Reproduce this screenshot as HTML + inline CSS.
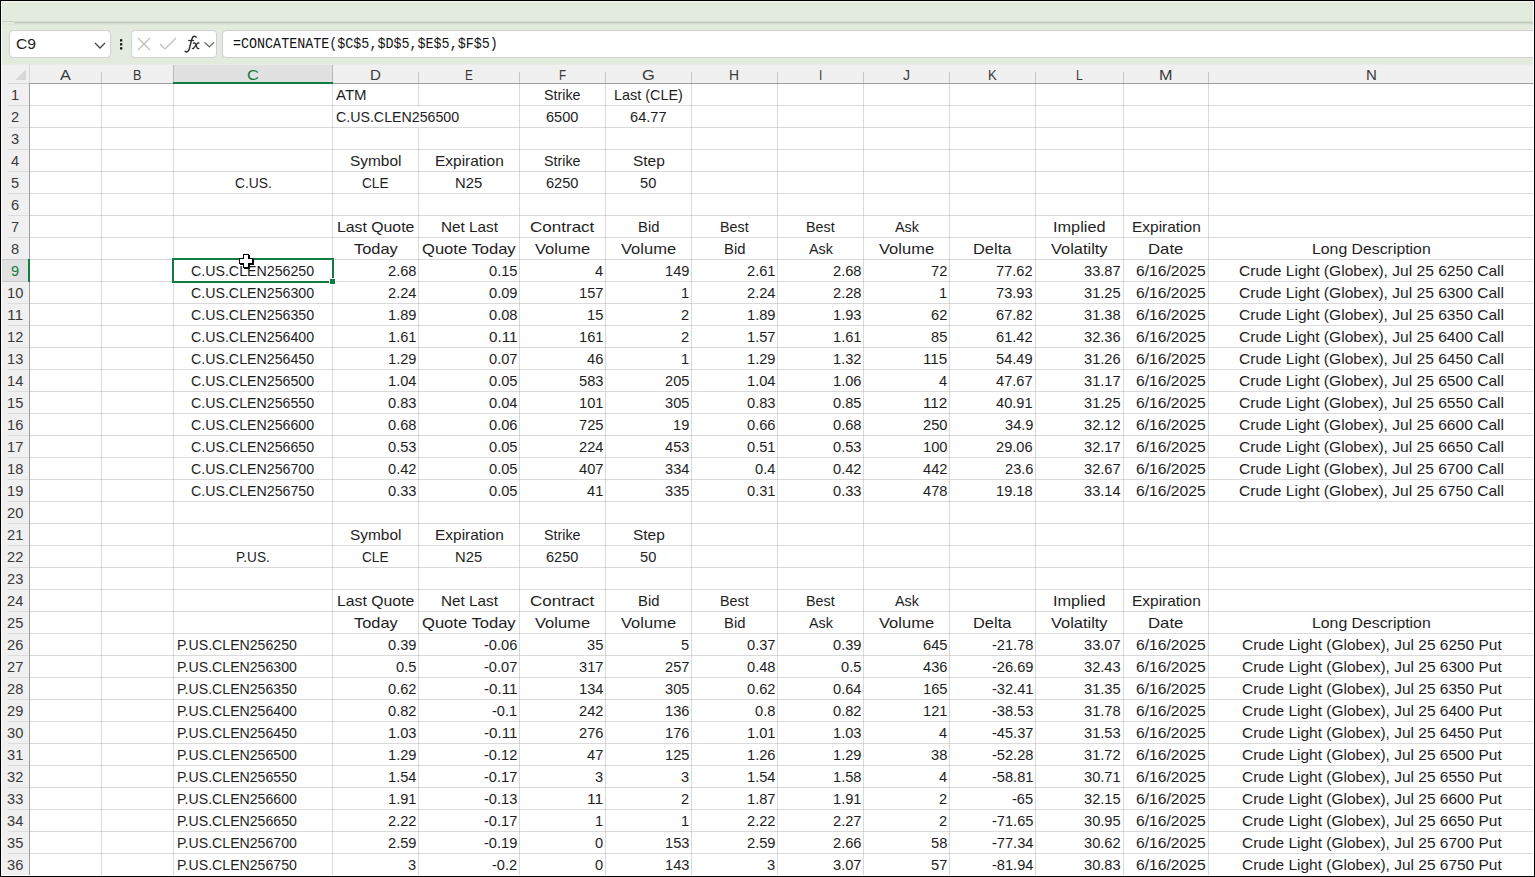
<!DOCTYPE html><html><head><meta charset="utf-8"><style>
html,body{margin:0;padding:0;}
body{width:1535px;height:877px;overflow:hidden;position:relative;background:#fff;font-family:"Liberation Sans",sans-serif;}
.a{position:absolute;}
.t{position:absolute;white-space:nowrap;font-size:15px;line-height:22px;height:22px;color:#1e1e1e;transform-origin:0 0;}
.h{position:absolute;white-space:nowrap;font-size:15px;line-height:19px;color:#444;transform-origin:0 0;}
</style></head><body>

<div class="a" style="left:0;top:0;width:1535px;height:64px;background:#e2ebde"></div>
<div class="a" style="left:0;top:21px;width:14px;height:1px;background:#cbd3c8"></div>
<div class="a" style="left:14px;top:21px;width:1521px;height:1px;background:#d6ded3"></div>
<div class="a" style="left:14px;top:22px;width:1521px;height:1px;background:#c2cabf"></div>
<div class="a" style="left:14px;top:23px;width:1521px;height:1px;background:#d3dbd0"></div>
<div class="a" style="left:0;top:24px;width:1535px;height:1px;background:#dde5da"></div>
<div class="a" style="left:9px;top:30px;width:100px;height:26px;border:1px solid #d0d0d0;border-radius:4px;background:#fff"></div>
<div class="a" style="left:131px;top:30px;width:84px;height:26px;border:1px solid #d0d0d0;border-radius:4px;background:#fff"></div>
<div class="a" style="left:222px;top:30px;width:1330px;height:26px;border:1px solid #d0d0d0;border-radius:4px;background:#fff"></div>
<div class="t" style="left:15.50px;top:33.00px;transform:scaleX(1.0456);color:#222">C9</div>
<svg class="a" style="left:0;top:0" width="1535" height="64"><path d="M95 43 L100 48 L105 43" fill="none" stroke="#444" stroke-width="1.3"/><rect x="120" y="39.2" width="2.3" height="2.3" fill="#1a1a1a"/><rect x="120" y="43.2" width="2.3" height="2.3" fill="#1a1a1a"/><rect x="120" y="47.2" width="2.3" height="2.3" fill="#1a1a1a"/><path d="M138 38 L150 50 M150 38 L138 50" stroke="#bcbcbc" stroke-width="1.2" fill="none"/><path d="M160 44 L165 49 L176 38" stroke="#bcbcbc" stroke-width="1.2" fill="none"/><path d="M204.5 42.2 L209.3 46.8 L214.1 42.2" fill="none" stroke="#6e6e6e" stroke-width="1.2"/></svg>
<svg class="a" style="left:0;top:0" width="230" height="64"><path d="M196.4 37.8 C196.0 36.3 194.4 35.8 193.3 36.6 C192.3 37.3 191.7 39.3 191.1 41.8 L189.7 47.3 C189.1 49.9 188.1 51.9 186.5 51.9 C185.6 51.9 185.1 51.3 184.9 50.7" fill="none" stroke="#2b2b2b" stroke-width="1.45"/><path d="M188.2 40.5 H193.9" fill="none" stroke="#2b2b2b" stroke-width="1.25"/><path d="M192.9 43.6 C194.3 42.4 195.2 42.9 195.7 44.4 L197.0 47.6 C197.5 48.9 198.4 49.0 199.2 48.1" fill="none" stroke="#2b2b2b" stroke-width="1.3"/><path d="M199.4 43.4 C198.7 42.6 197.8 42.8 197.1 43.6 L193.9 47.9 C193.3 48.8 192.6 48.8 192.2 48.2" fill="none" stroke="#2b2b2b" stroke-width="1.3"/></svg>
<div class="a" style="left:233px;top:34px;font-family:'Liberation Mono',monospace;font-size:14px;line-height:21px;transform-origin:0 0;transform:scaleX(0.955);color:#111;white-space:nowrap">=CONCATENATE($C$5,$D$5,$E$5,$F$5)</div>
<div class="a" style="left:1px;top:64px;width:1534px;height:20px;background:#f0f0f0"></div>
<div class="a" style="left:1px;top:84px;width:28px;height:793px;background:#f0f0f0"></div>
<div class="a" style="left:1px;top:64px;width:1534px;height:1px;background:#e9ece6"></div>
<div class="a" style="left:173px;top:65px;width:159px;height:18px;background:#e1e1e1"></div>
<div class="a" style="left:1px;top:260px;width:28px;height:21px;background:#e1e1e1"></div>
<svg class="a" style="left:0;top:0" width="1535" height="877" shape-rendering="crispEdges"><rect x="30" y="105" width="1505" height="1" fill="#dadada"/><rect x="8" y="105" width="21" height="1" fill="#dcdcdc"/><rect x="30" y="127" width="1505" height="1" fill="#dadada"/><rect x="8" y="127" width="21" height="1" fill="#dcdcdc"/><rect x="30" y="149" width="1505" height="1" fill="#dadada"/><rect x="8" y="149" width="21" height="1" fill="#dcdcdc"/><rect x="30" y="171" width="1505" height="1" fill="#dadada"/><rect x="8" y="171" width="21" height="1" fill="#dcdcdc"/><rect x="30" y="193" width="1505" height="1" fill="#dadada"/><rect x="8" y="193" width="21" height="1" fill="#dcdcdc"/><rect x="30" y="215" width="1505" height="1" fill="#dadada"/><rect x="8" y="215" width="21" height="1" fill="#dcdcdc"/><rect x="30" y="237" width="1505" height="1" fill="#dadada"/><rect x="8" y="237" width="21" height="1" fill="#dcdcdc"/><rect x="30" y="259" width="1505" height="1" fill="#dadada"/><rect x="8" y="259" width="21" height="1" fill="#dcdcdc"/><rect x="30" y="281" width="1505" height="1" fill="#dadada"/><rect x="8" y="281" width="21" height="1" fill="#dcdcdc"/><rect x="30" y="303" width="1505" height="1" fill="#dadada"/><rect x="8" y="303" width="21" height="1" fill="#dcdcdc"/><rect x="30" y="325" width="1505" height="1" fill="#dadada"/><rect x="8" y="325" width="21" height="1" fill="#dcdcdc"/><rect x="30" y="347" width="1505" height="1" fill="#dadada"/><rect x="8" y="347" width="21" height="1" fill="#dcdcdc"/><rect x="30" y="369" width="1505" height="1" fill="#dadada"/><rect x="8" y="369" width="21" height="1" fill="#dcdcdc"/><rect x="30" y="391" width="1505" height="1" fill="#dadada"/><rect x="8" y="391" width="21" height="1" fill="#dcdcdc"/><rect x="30" y="413" width="1505" height="1" fill="#dadada"/><rect x="8" y="413" width="21" height="1" fill="#dcdcdc"/><rect x="30" y="435" width="1505" height="1" fill="#dadada"/><rect x="8" y="435" width="21" height="1" fill="#dcdcdc"/><rect x="30" y="457" width="1505" height="1" fill="#dadada"/><rect x="8" y="457" width="21" height="1" fill="#dcdcdc"/><rect x="30" y="479" width="1505" height="1" fill="#dadada"/><rect x="8" y="479" width="21" height="1" fill="#dcdcdc"/><rect x="30" y="501" width="1505" height="1" fill="#dadada"/><rect x="8" y="501" width="21" height="1" fill="#dcdcdc"/><rect x="30" y="523" width="1505" height="1" fill="#dadada"/><rect x="8" y="523" width="21" height="1" fill="#dcdcdc"/><rect x="30" y="545" width="1505" height="1" fill="#dadada"/><rect x="8" y="545" width="21" height="1" fill="#dcdcdc"/><rect x="30" y="567" width="1505" height="1" fill="#dadada"/><rect x="8" y="567" width="21" height="1" fill="#dcdcdc"/><rect x="30" y="589" width="1505" height="1" fill="#dadada"/><rect x="8" y="589" width="21" height="1" fill="#dcdcdc"/><rect x="30" y="611" width="1505" height="1" fill="#dadada"/><rect x="8" y="611" width="21" height="1" fill="#dcdcdc"/><rect x="30" y="633" width="1505" height="1" fill="#dadada"/><rect x="8" y="633" width="21" height="1" fill="#dcdcdc"/><rect x="30" y="655" width="1505" height="1" fill="#dadada"/><rect x="8" y="655" width="21" height="1" fill="#dcdcdc"/><rect x="30" y="677" width="1505" height="1" fill="#dadada"/><rect x="8" y="677" width="21" height="1" fill="#dcdcdc"/><rect x="30" y="699" width="1505" height="1" fill="#dadada"/><rect x="8" y="699" width="21" height="1" fill="#dcdcdc"/><rect x="30" y="721" width="1505" height="1" fill="#dadada"/><rect x="8" y="721" width="21" height="1" fill="#dcdcdc"/><rect x="30" y="743" width="1505" height="1" fill="#dadada"/><rect x="8" y="743" width="21" height="1" fill="#dcdcdc"/><rect x="30" y="765" width="1505" height="1" fill="#dadada"/><rect x="8" y="765" width="21" height="1" fill="#dcdcdc"/><rect x="30" y="787" width="1505" height="1" fill="#dadada"/><rect x="8" y="787" width="21" height="1" fill="#dcdcdc"/><rect x="30" y="809" width="1505" height="1" fill="#dadada"/><rect x="8" y="809" width="21" height="1" fill="#dcdcdc"/><rect x="30" y="831" width="1505" height="1" fill="#dadada"/><rect x="8" y="831" width="21" height="1" fill="#dcdcdc"/><rect x="30" y="853" width="1505" height="1" fill="#dadada"/><rect x="8" y="853" width="21" height="1" fill="#dcdcdc"/><rect x="30" y="875" width="1505" height="1" fill="#dadada"/><rect x="8" y="875" width="21" height="1" fill="#dcdcdc"/><rect x="101" y="84" width="1" height="793" fill="#dadada"/><rect x="101" y="72" width="1" height="11" fill="#c6c6c6"/><rect x="173" y="84" width="1" height="793" fill="#dadada"/><rect x="173" y="72" width="1" height="11" fill="#c6c6c6"/><rect x="332" y="84" width="1" height="793" fill="#dadada"/><rect x="332" y="72" width="1" height="11" fill="#c6c6c6"/><rect x="418" y="84" width="1" height="22" fill="#dadada"/><rect x="418" y="127" width="1" height="750" fill="#dadada"/><rect x="418" y="72" width="1" height="11" fill="#c6c6c6"/><rect x="519" y="84" width="1" height="793" fill="#dadada"/><rect x="519" y="72" width="1" height="11" fill="#c6c6c6"/><rect x="605" y="84" width="1" height="793" fill="#dadada"/><rect x="605" y="72" width="1" height="11" fill="#c6c6c6"/><rect x="691" y="84" width="1" height="793" fill="#dadada"/><rect x="691" y="72" width="1" height="11" fill="#c6c6c6"/><rect x="777" y="84" width="1" height="793" fill="#dadada"/><rect x="777" y="72" width="1" height="11" fill="#c6c6c6"/><rect x="863" y="84" width="1" height="793" fill="#dadada"/><rect x="863" y="72" width="1" height="11" fill="#c6c6c6"/><rect x="949" y="84" width="1" height="793" fill="#dadada"/><rect x="949" y="72" width="1" height="11" fill="#c6c6c6"/><rect x="1035" y="84" width="1" height="793" fill="#dadada"/><rect x="1035" y="72" width="1" height="11" fill="#c6c6c6"/><rect x="1123" y="84" width="1" height="793" fill="#dadada"/><rect x="1123" y="72" width="1" height="11" fill="#c6c6c6"/><rect x="1208" y="84" width="1" height="793" fill="#dadada"/><rect x="1208" y="72" width="1" height="11" fill="#c6c6c6"/><rect x="101" y="105" width="1" height="1" fill="#c9c9c9"/><rect x="173" y="105" width="1" height="1" fill="#c9c9c9"/><rect x="332" y="105" width="1" height="1" fill="#c9c9c9"/><rect x="418" y="105" width="1" height="1" fill="#c9c9c9"/><rect x="519" y="105" width="1" height="1" fill="#c9c9c9"/><rect x="605" y="105" width="1" height="1" fill="#c9c9c9"/><rect x="691" y="105" width="1" height="1" fill="#c9c9c9"/><rect x="777" y="105" width="1" height="1" fill="#c9c9c9"/><rect x="863" y="105" width="1" height="1" fill="#c9c9c9"/><rect x="949" y="105" width="1" height="1" fill="#c9c9c9"/><rect x="1035" y="105" width="1" height="1" fill="#c9c9c9"/><rect x="1123" y="105" width="1" height="1" fill="#c9c9c9"/><rect x="1208" y="105" width="1" height="1" fill="#c9c9c9"/><rect x="101" y="127" width="1" height="1" fill="#c9c9c9"/><rect x="173" y="127" width="1" height="1" fill="#c9c9c9"/><rect x="332" y="127" width="1" height="1" fill="#c9c9c9"/><rect x="519" y="127" width="1" height="1" fill="#c9c9c9"/><rect x="605" y="127" width="1" height="1" fill="#c9c9c9"/><rect x="691" y="127" width="1" height="1" fill="#c9c9c9"/><rect x="777" y="127" width="1" height="1" fill="#c9c9c9"/><rect x="863" y="127" width="1" height="1" fill="#c9c9c9"/><rect x="949" y="127" width="1" height="1" fill="#c9c9c9"/><rect x="1035" y="127" width="1" height="1" fill="#c9c9c9"/><rect x="1123" y="127" width="1" height="1" fill="#c9c9c9"/><rect x="1208" y="127" width="1" height="1" fill="#c9c9c9"/><rect x="101" y="149" width="1" height="1" fill="#c9c9c9"/><rect x="173" y="149" width="1" height="1" fill="#c9c9c9"/><rect x="332" y="149" width="1" height="1" fill="#c9c9c9"/><rect x="418" y="149" width="1" height="1" fill="#c9c9c9"/><rect x="519" y="149" width="1" height="1" fill="#c9c9c9"/><rect x="605" y="149" width="1" height="1" fill="#c9c9c9"/><rect x="691" y="149" width="1" height="1" fill="#c9c9c9"/><rect x="777" y="149" width="1" height="1" fill="#c9c9c9"/><rect x="863" y="149" width="1" height="1" fill="#c9c9c9"/><rect x="949" y="149" width="1" height="1" fill="#c9c9c9"/><rect x="1035" y="149" width="1" height="1" fill="#c9c9c9"/><rect x="1123" y="149" width="1" height="1" fill="#c9c9c9"/><rect x="1208" y="149" width="1" height="1" fill="#c9c9c9"/><rect x="101" y="171" width="1" height="1" fill="#c9c9c9"/><rect x="173" y="171" width="1" height="1" fill="#c9c9c9"/><rect x="332" y="171" width="1" height="1" fill="#c9c9c9"/><rect x="418" y="171" width="1" height="1" fill="#c9c9c9"/><rect x="519" y="171" width="1" height="1" fill="#c9c9c9"/><rect x="605" y="171" width="1" height="1" fill="#c9c9c9"/><rect x="691" y="171" width="1" height="1" fill="#c9c9c9"/><rect x="777" y="171" width="1" height="1" fill="#c9c9c9"/><rect x="863" y="171" width="1" height="1" fill="#c9c9c9"/><rect x="949" y="171" width="1" height="1" fill="#c9c9c9"/><rect x="1035" y="171" width="1" height="1" fill="#c9c9c9"/><rect x="1123" y="171" width="1" height="1" fill="#c9c9c9"/><rect x="1208" y="171" width="1" height="1" fill="#c9c9c9"/><rect x="101" y="193" width="1" height="1" fill="#c9c9c9"/><rect x="173" y="193" width="1" height="1" fill="#c9c9c9"/><rect x="332" y="193" width="1" height="1" fill="#c9c9c9"/><rect x="418" y="193" width="1" height="1" fill="#c9c9c9"/><rect x="519" y="193" width="1" height="1" fill="#c9c9c9"/><rect x="605" y="193" width="1" height="1" fill="#c9c9c9"/><rect x="691" y="193" width="1" height="1" fill="#c9c9c9"/><rect x="777" y="193" width="1" height="1" fill="#c9c9c9"/><rect x="863" y="193" width="1" height="1" fill="#c9c9c9"/><rect x="949" y="193" width="1" height="1" fill="#c9c9c9"/><rect x="1035" y="193" width="1" height="1" fill="#c9c9c9"/><rect x="1123" y="193" width="1" height="1" fill="#c9c9c9"/><rect x="1208" y="193" width="1" height="1" fill="#c9c9c9"/><rect x="101" y="215" width="1" height="1" fill="#c9c9c9"/><rect x="173" y="215" width="1" height="1" fill="#c9c9c9"/><rect x="332" y="215" width="1" height="1" fill="#c9c9c9"/><rect x="418" y="215" width="1" height="1" fill="#c9c9c9"/><rect x="519" y="215" width="1" height="1" fill="#c9c9c9"/><rect x="605" y="215" width="1" height="1" fill="#c9c9c9"/><rect x="691" y="215" width="1" height="1" fill="#c9c9c9"/><rect x="777" y="215" width="1" height="1" fill="#c9c9c9"/><rect x="863" y="215" width="1" height="1" fill="#c9c9c9"/><rect x="949" y="215" width="1" height="1" fill="#c9c9c9"/><rect x="1035" y="215" width="1" height="1" fill="#c9c9c9"/><rect x="1123" y="215" width="1" height="1" fill="#c9c9c9"/><rect x="1208" y="215" width="1" height="1" fill="#c9c9c9"/><rect x="101" y="237" width="1" height="1" fill="#c9c9c9"/><rect x="173" y="237" width="1" height="1" fill="#c9c9c9"/><rect x="332" y="237" width="1" height="1" fill="#c9c9c9"/><rect x="418" y="237" width="1" height="1" fill="#c9c9c9"/><rect x="519" y="237" width="1" height="1" fill="#c9c9c9"/><rect x="605" y="237" width="1" height="1" fill="#c9c9c9"/><rect x="691" y="237" width="1" height="1" fill="#c9c9c9"/><rect x="777" y="237" width="1" height="1" fill="#c9c9c9"/><rect x="863" y="237" width="1" height="1" fill="#c9c9c9"/><rect x="949" y="237" width="1" height="1" fill="#c9c9c9"/><rect x="1035" y="237" width="1" height="1" fill="#c9c9c9"/><rect x="1123" y="237" width="1" height="1" fill="#c9c9c9"/><rect x="1208" y="237" width="1" height="1" fill="#c9c9c9"/><rect x="101" y="259" width="1" height="1" fill="#c9c9c9"/><rect x="173" y="259" width="1" height="1" fill="#c9c9c9"/><rect x="332" y="259" width="1" height="1" fill="#c9c9c9"/><rect x="418" y="259" width="1" height="1" fill="#c9c9c9"/><rect x="519" y="259" width="1" height="1" fill="#c9c9c9"/><rect x="605" y="259" width="1" height="1" fill="#c9c9c9"/><rect x="691" y="259" width="1" height="1" fill="#c9c9c9"/><rect x="777" y="259" width="1" height="1" fill="#c9c9c9"/><rect x="863" y="259" width="1" height="1" fill="#c9c9c9"/><rect x="949" y="259" width="1" height="1" fill="#c9c9c9"/><rect x="1035" y="259" width="1" height="1" fill="#c9c9c9"/><rect x="1123" y="259" width="1" height="1" fill="#c9c9c9"/><rect x="1208" y="259" width="1" height="1" fill="#c9c9c9"/><rect x="101" y="281" width="1" height="1" fill="#c9c9c9"/><rect x="173" y="281" width="1" height="1" fill="#c9c9c9"/><rect x="332" y="281" width="1" height="1" fill="#c9c9c9"/><rect x="418" y="281" width="1" height="1" fill="#c9c9c9"/><rect x="519" y="281" width="1" height="1" fill="#c9c9c9"/><rect x="605" y="281" width="1" height="1" fill="#c9c9c9"/><rect x="691" y="281" width="1" height="1" fill="#c9c9c9"/><rect x="777" y="281" width="1" height="1" fill="#c9c9c9"/><rect x="863" y="281" width="1" height="1" fill="#c9c9c9"/><rect x="949" y="281" width="1" height="1" fill="#c9c9c9"/><rect x="1035" y="281" width="1" height="1" fill="#c9c9c9"/><rect x="1123" y="281" width="1" height="1" fill="#c9c9c9"/><rect x="1208" y="281" width="1" height="1" fill="#c9c9c9"/><rect x="101" y="303" width="1" height="1" fill="#c9c9c9"/><rect x="173" y="303" width="1" height="1" fill="#c9c9c9"/><rect x="332" y="303" width="1" height="1" fill="#c9c9c9"/><rect x="418" y="303" width="1" height="1" fill="#c9c9c9"/><rect x="519" y="303" width="1" height="1" fill="#c9c9c9"/><rect x="605" y="303" width="1" height="1" fill="#c9c9c9"/><rect x="691" y="303" width="1" height="1" fill="#c9c9c9"/><rect x="777" y="303" width="1" height="1" fill="#c9c9c9"/><rect x="863" y="303" width="1" height="1" fill="#c9c9c9"/><rect x="949" y="303" width="1" height="1" fill="#c9c9c9"/><rect x="1035" y="303" width="1" height="1" fill="#c9c9c9"/><rect x="1123" y="303" width="1" height="1" fill="#c9c9c9"/><rect x="1208" y="303" width="1" height="1" fill="#c9c9c9"/><rect x="101" y="325" width="1" height="1" fill="#c9c9c9"/><rect x="173" y="325" width="1" height="1" fill="#c9c9c9"/><rect x="332" y="325" width="1" height="1" fill="#c9c9c9"/><rect x="418" y="325" width="1" height="1" fill="#c9c9c9"/><rect x="519" y="325" width="1" height="1" fill="#c9c9c9"/><rect x="605" y="325" width="1" height="1" fill="#c9c9c9"/><rect x="691" y="325" width="1" height="1" fill="#c9c9c9"/><rect x="777" y="325" width="1" height="1" fill="#c9c9c9"/><rect x="863" y="325" width="1" height="1" fill="#c9c9c9"/><rect x="949" y="325" width="1" height="1" fill="#c9c9c9"/><rect x="1035" y="325" width="1" height="1" fill="#c9c9c9"/><rect x="1123" y="325" width="1" height="1" fill="#c9c9c9"/><rect x="1208" y="325" width="1" height="1" fill="#c9c9c9"/><rect x="101" y="347" width="1" height="1" fill="#c9c9c9"/><rect x="173" y="347" width="1" height="1" fill="#c9c9c9"/><rect x="332" y="347" width="1" height="1" fill="#c9c9c9"/><rect x="418" y="347" width="1" height="1" fill="#c9c9c9"/><rect x="519" y="347" width="1" height="1" fill="#c9c9c9"/><rect x="605" y="347" width="1" height="1" fill="#c9c9c9"/><rect x="691" y="347" width="1" height="1" fill="#c9c9c9"/><rect x="777" y="347" width="1" height="1" fill="#c9c9c9"/><rect x="863" y="347" width="1" height="1" fill="#c9c9c9"/><rect x="949" y="347" width="1" height="1" fill="#c9c9c9"/><rect x="1035" y="347" width="1" height="1" fill="#c9c9c9"/><rect x="1123" y="347" width="1" height="1" fill="#c9c9c9"/><rect x="1208" y="347" width="1" height="1" fill="#c9c9c9"/><rect x="101" y="369" width="1" height="1" fill="#c9c9c9"/><rect x="173" y="369" width="1" height="1" fill="#c9c9c9"/><rect x="332" y="369" width="1" height="1" fill="#c9c9c9"/><rect x="418" y="369" width="1" height="1" fill="#c9c9c9"/><rect x="519" y="369" width="1" height="1" fill="#c9c9c9"/><rect x="605" y="369" width="1" height="1" fill="#c9c9c9"/><rect x="691" y="369" width="1" height="1" fill="#c9c9c9"/><rect x="777" y="369" width="1" height="1" fill="#c9c9c9"/><rect x="863" y="369" width="1" height="1" fill="#c9c9c9"/><rect x="949" y="369" width="1" height="1" fill="#c9c9c9"/><rect x="1035" y="369" width="1" height="1" fill="#c9c9c9"/><rect x="1123" y="369" width="1" height="1" fill="#c9c9c9"/><rect x="1208" y="369" width="1" height="1" fill="#c9c9c9"/><rect x="101" y="391" width="1" height="1" fill="#c9c9c9"/><rect x="173" y="391" width="1" height="1" fill="#c9c9c9"/><rect x="332" y="391" width="1" height="1" fill="#c9c9c9"/><rect x="418" y="391" width="1" height="1" fill="#c9c9c9"/><rect x="519" y="391" width="1" height="1" fill="#c9c9c9"/><rect x="605" y="391" width="1" height="1" fill="#c9c9c9"/><rect x="691" y="391" width="1" height="1" fill="#c9c9c9"/><rect x="777" y="391" width="1" height="1" fill="#c9c9c9"/><rect x="863" y="391" width="1" height="1" fill="#c9c9c9"/><rect x="949" y="391" width="1" height="1" fill="#c9c9c9"/><rect x="1035" y="391" width="1" height="1" fill="#c9c9c9"/><rect x="1123" y="391" width="1" height="1" fill="#c9c9c9"/><rect x="1208" y="391" width="1" height="1" fill="#c9c9c9"/><rect x="101" y="413" width="1" height="1" fill="#c9c9c9"/><rect x="173" y="413" width="1" height="1" fill="#c9c9c9"/><rect x="332" y="413" width="1" height="1" fill="#c9c9c9"/><rect x="418" y="413" width="1" height="1" fill="#c9c9c9"/><rect x="519" y="413" width="1" height="1" fill="#c9c9c9"/><rect x="605" y="413" width="1" height="1" fill="#c9c9c9"/><rect x="691" y="413" width="1" height="1" fill="#c9c9c9"/><rect x="777" y="413" width="1" height="1" fill="#c9c9c9"/><rect x="863" y="413" width="1" height="1" fill="#c9c9c9"/><rect x="949" y="413" width="1" height="1" fill="#c9c9c9"/><rect x="1035" y="413" width="1" height="1" fill="#c9c9c9"/><rect x="1123" y="413" width="1" height="1" fill="#c9c9c9"/><rect x="1208" y="413" width="1" height="1" fill="#c9c9c9"/><rect x="101" y="435" width="1" height="1" fill="#c9c9c9"/><rect x="173" y="435" width="1" height="1" fill="#c9c9c9"/><rect x="332" y="435" width="1" height="1" fill="#c9c9c9"/><rect x="418" y="435" width="1" height="1" fill="#c9c9c9"/><rect x="519" y="435" width="1" height="1" fill="#c9c9c9"/><rect x="605" y="435" width="1" height="1" fill="#c9c9c9"/><rect x="691" y="435" width="1" height="1" fill="#c9c9c9"/><rect x="777" y="435" width="1" height="1" fill="#c9c9c9"/><rect x="863" y="435" width="1" height="1" fill="#c9c9c9"/><rect x="949" y="435" width="1" height="1" fill="#c9c9c9"/><rect x="1035" y="435" width="1" height="1" fill="#c9c9c9"/><rect x="1123" y="435" width="1" height="1" fill="#c9c9c9"/><rect x="1208" y="435" width="1" height="1" fill="#c9c9c9"/><rect x="101" y="457" width="1" height="1" fill="#c9c9c9"/><rect x="173" y="457" width="1" height="1" fill="#c9c9c9"/><rect x="332" y="457" width="1" height="1" fill="#c9c9c9"/><rect x="418" y="457" width="1" height="1" fill="#c9c9c9"/><rect x="519" y="457" width="1" height="1" fill="#c9c9c9"/><rect x="605" y="457" width="1" height="1" fill="#c9c9c9"/><rect x="691" y="457" width="1" height="1" fill="#c9c9c9"/><rect x="777" y="457" width="1" height="1" fill="#c9c9c9"/><rect x="863" y="457" width="1" height="1" fill="#c9c9c9"/><rect x="949" y="457" width="1" height="1" fill="#c9c9c9"/><rect x="1035" y="457" width="1" height="1" fill="#c9c9c9"/><rect x="1123" y="457" width="1" height="1" fill="#c9c9c9"/><rect x="1208" y="457" width="1" height="1" fill="#c9c9c9"/><rect x="101" y="479" width="1" height="1" fill="#c9c9c9"/><rect x="173" y="479" width="1" height="1" fill="#c9c9c9"/><rect x="332" y="479" width="1" height="1" fill="#c9c9c9"/><rect x="418" y="479" width="1" height="1" fill="#c9c9c9"/><rect x="519" y="479" width="1" height="1" fill="#c9c9c9"/><rect x="605" y="479" width="1" height="1" fill="#c9c9c9"/><rect x="691" y="479" width="1" height="1" fill="#c9c9c9"/><rect x="777" y="479" width="1" height="1" fill="#c9c9c9"/><rect x="863" y="479" width="1" height="1" fill="#c9c9c9"/><rect x="949" y="479" width="1" height="1" fill="#c9c9c9"/><rect x="1035" y="479" width="1" height="1" fill="#c9c9c9"/><rect x="1123" y="479" width="1" height="1" fill="#c9c9c9"/><rect x="1208" y="479" width="1" height="1" fill="#c9c9c9"/><rect x="101" y="501" width="1" height="1" fill="#c9c9c9"/><rect x="173" y="501" width="1" height="1" fill="#c9c9c9"/><rect x="332" y="501" width="1" height="1" fill="#c9c9c9"/><rect x="418" y="501" width="1" height="1" fill="#c9c9c9"/><rect x="519" y="501" width="1" height="1" fill="#c9c9c9"/><rect x="605" y="501" width="1" height="1" fill="#c9c9c9"/><rect x="691" y="501" width="1" height="1" fill="#c9c9c9"/><rect x="777" y="501" width="1" height="1" fill="#c9c9c9"/><rect x="863" y="501" width="1" height="1" fill="#c9c9c9"/><rect x="949" y="501" width="1" height="1" fill="#c9c9c9"/><rect x="1035" y="501" width="1" height="1" fill="#c9c9c9"/><rect x="1123" y="501" width="1" height="1" fill="#c9c9c9"/><rect x="1208" y="501" width="1" height="1" fill="#c9c9c9"/><rect x="101" y="523" width="1" height="1" fill="#c9c9c9"/><rect x="173" y="523" width="1" height="1" fill="#c9c9c9"/><rect x="332" y="523" width="1" height="1" fill="#c9c9c9"/><rect x="418" y="523" width="1" height="1" fill="#c9c9c9"/><rect x="519" y="523" width="1" height="1" fill="#c9c9c9"/><rect x="605" y="523" width="1" height="1" fill="#c9c9c9"/><rect x="691" y="523" width="1" height="1" fill="#c9c9c9"/><rect x="777" y="523" width="1" height="1" fill="#c9c9c9"/><rect x="863" y="523" width="1" height="1" fill="#c9c9c9"/><rect x="949" y="523" width="1" height="1" fill="#c9c9c9"/><rect x="1035" y="523" width="1" height="1" fill="#c9c9c9"/><rect x="1123" y="523" width="1" height="1" fill="#c9c9c9"/><rect x="1208" y="523" width="1" height="1" fill="#c9c9c9"/><rect x="101" y="545" width="1" height="1" fill="#c9c9c9"/><rect x="173" y="545" width="1" height="1" fill="#c9c9c9"/><rect x="332" y="545" width="1" height="1" fill="#c9c9c9"/><rect x="418" y="545" width="1" height="1" fill="#c9c9c9"/><rect x="519" y="545" width="1" height="1" fill="#c9c9c9"/><rect x="605" y="545" width="1" height="1" fill="#c9c9c9"/><rect x="691" y="545" width="1" height="1" fill="#c9c9c9"/><rect x="777" y="545" width="1" height="1" fill="#c9c9c9"/><rect x="863" y="545" width="1" height="1" fill="#c9c9c9"/><rect x="949" y="545" width="1" height="1" fill="#c9c9c9"/><rect x="1035" y="545" width="1" height="1" fill="#c9c9c9"/><rect x="1123" y="545" width="1" height="1" fill="#c9c9c9"/><rect x="1208" y="545" width="1" height="1" fill="#c9c9c9"/><rect x="101" y="567" width="1" height="1" fill="#c9c9c9"/><rect x="173" y="567" width="1" height="1" fill="#c9c9c9"/><rect x="332" y="567" width="1" height="1" fill="#c9c9c9"/><rect x="418" y="567" width="1" height="1" fill="#c9c9c9"/><rect x="519" y="567" width="1" height="1" fill="#c9c9c9"/><rect x="605" y="567" width="1" height="1" fill="#c9c9c9"/><rect x="691" y="567" width="1" height="1" fill="#c9c9c9"/><rect x="777" y="567" width="1" height="1" fill="#c9c9c9"/><rect x="863" y="567" width="1" height="1" fill="#c9c9c9"/><rect x="949" y="567" width="1" height="1" fill="#c9c9c9"/><rect x="1035" y="567" width="1" height="1" fill="#c9c9c9"/><rect x="1123" y="567" width="1" height="1" fill="#c9c9c9"/><rect x="1208" y="567" width="1" height="1" fill="#c9c9c9"/><rect x="101" y="589" width="1" height="1" fill="#c9c9c9"/><rect x="173" y="589" width="1" height="1" fill="#c9c9c9"/><rect x="332" y="589" width="1" height="1" fill="#c9c9c9"/><rect x="418" y="589" width="1" height="1" fill="#c9c9c9"/><rect x="519" y="589" width="1" height="1" fill="#c9c9c9"/><rect x="605" y="589" width="1" height="1" fill="#c9c9c9"/><rect x="691" y="589" width="1" height="1" fill="#c9c9c9"/><rect x="777" y="589" width="1" height="1" fill="#c9c9c9"/><rect x="863" y="589" width="1" height="1" fill="#c9c9c9"/><rect x="949" y="589" width="1" height="1" fill="#c9c9c9"/><rect x="1035" y="589" width="1" height="1" fill="#c9c9c9"/><rect x="1123" y="589" width="1" height="1" fill="#c9c9c9"/><rect x="1208" y="589" width="1" height="1" fill="#c9c9c9"/><rect x="101" y="611" width="1" height="1" fill="#c9c9c9"/><rect x="173" y="611" width="1" height="1" fill="#c9c9c9"/><rect x="332" y="611" width="1" height="1" fill="#c9c9c9"/><rect x="418" y="611" width="1" height="1" fill="#c9c9c9"/><rect x="519" y="611" width="1" height="1" fill="#c9c9c9"/><rect x="605" y="611" width="1" height="1" fill="#c9c9c9"/><rect x="691" y="611" width="1" height="1" fill="#c9c9c9"/><rect x="777" y="611" width="1" height="1" fill="#c9c9c9"/><rect x="863" y="611" width="1" height="1" fill="#c9c9c9"/><rect x="949" y="611" width="1" height="1" fill="#c9c9c9"/><rect x="1035" y="611" width="1" height="1" fill="#c9c9c9"/><rect x="1123" y="611" width="1" height="1" fill="#c9c9c9"/><rect x="1208" y="611" width="1" height="1" fill="#c9c9c9"/><rect x="101" y="633" width="1" height="1" fill="#c9c9c9"/><rect x="173" y="633" width="1" height="1" fill="#c9c9c9"/><rect x="332" y="633" width="1" height="1" fill="#c9c9c9"/><rect x="418" y="633" width="1" height="1" fill="#c9c9c9"/><rect x="519" y="633" width="1" height="1" fill="#c9c9c9"/><rect x="605" y="633" width="1" height="1" fill="#c9c9c9"/><rect x="691" y="633" width="1" height="1" fill="#c9c9c9"/><rect x="777" y="633" width="1" height="1" fill="#c9c9c9"/><rect x="863" y="633" width="1" height="1" fill="#c9c9c9"/><rect x="949" y="633" width="1" height="1" fill="#c9c9c9"/><rect x="1035" y="633" width="1" height="1" fill="#c9c9c9"/><rect x="1123" y="633" width="1" height="1" fill="#c9c9c9"/><rect x="1208" y="633" width="1" height="1" fill="#c9c9c9"/><rect x="101" y="655" width="1" height="1" fill="#c9c9c9"/><rect x="173" y="655" width="1" height="1" fill="#c9c9c9"/><rect x="332" y="655" width="1" height="1" fill="#c9c9c9"/><rect x="418" y="655" width="1" height="1" fill="#c9c9c9"/><rect x="519" y="655" width="1" height="1" fill="#c9c9c9"/><rect x="605" y="655" width="1" height="1" fill="#c9c9c9"/><rect x="691" y="655" width="1" height="1" fill="#c9c9c9"/><rect x="777" y="655" width="1" height="1" fill="#c9c9c9"/><rect x="863" y="655" width="1" height="1" fill="#c9c9c9"/><rect x="949" y="655" width="1" height="1" fill="#c9c9c9"/><rect x="1035" y="655" width="1" height="1" fill="#c9c9c9"/><rect x="1123" y="655" width="1" height="1" fill="#c9c9c9"/><rect x="1208" y="655" width="1" height="1" fill="#c9c9c9"/><rect x="101" y="677" width="1" height="1" fill="#c9c9c9"/><rect x="173" y="677" width="1" height="1" fill="#c9c9c9"/><rect x="332" y="677" width="1" height="1" fill="#c9c9c9"/><rect x="418" y="677" width="1" height="1" fill="#c9c9c9"/><rect x="519" y="677" width="1" height="1" fill="#c9c9c9"/><rect x="605" y="677" width="1" height="1" fill="#c9c9c9"/><rect x="691" y="677" width="1" height="1" fill="#c9c9c9"/><rect x="777" y="677" width="1" height="1" fill="#c9c9c9"/><rect x="863" y="677" width="1" height="1" fill="#c9c9c9"/><rect x="949" y="677" width="1" height="1" fill="#c9c9c9"/><rect x="1035" y="677" width="1" height="1" fill="#c9c9c9"/><rect x="1123" y="677" width="1" height="1" fill="#c9c9c9"/><rect x="1208" y="677" width="1" height="1" fill="#c9c9c9"/><rect x="101" y="699" width="1" height="1" fill="#c9c9c9"/><rect x="173" y="699" width="1" height="1" fill="#c9c9c9"/><rect x="332" y="699" width="1" height="1" fill="#c9c9c9"/><rect x="418" y="699" width="1" height="1" fill="#c9c9c9"/><rect x="519" y="699" width="1" height="1" fill="#c9c9c9"/><rect x="605" y="699" width="1" height="1" fill="#c9c9c9"/><rect x="691" y="699" width="1" height="1" fill="#c9c9c9"/><rect x="777" y="699" width="1" height="1" fill="#c9c9c9"/><rect x="863" y="699" width="1" height="1" fill="#c9c9c9"/><rect x="949" y="699" width="1" height="1" fill="#c9c9c9"/><rect x="1035" y="699" width="1" height="1" fill="#c9c9c9"/><rect x="1123" y="699" width="1" height="1" fill="#c9c9c9"/><rect x="1208" y="699" width="1" height="1" fill="#c9c9c9"/><rect x="101" y="721" width="1" height="1" fill="#c9c9c9"/><rect x="173" y="721" width="1" height="1" fill="#c9c9c9"/><rect x="332" y="721" width="1" height="1" fill="#c9c9c9"/><rect x="418" y="721" width="1" height="1" fill="#c9c9c9"/><rect x="519" y="721" width="1" height="1" fill="#c9c9c9"/><rect x="605" y="721" width="1" height="1" fill="#c9c9c9"/><rect x="691" y="721" width="1" height="1" fill="#c9c9c9"/><rect x="777" y="721" width="1" height="1" fill="#c9c9c9"/><rect x="863" y="721" width="1" height="1" fill="#c9c9c9"/><rect x="949" y="721" width="1" height="1" fill="#c9c9c9"/><rect x="1035" y="721" width="1" height="1" fill="#c9c9c9"/><rect x="1123" y="721" width="1" height="1" fill="#c9c9c9"/><rect x="1208" y="721" width="1" height="1" fill="#c9c9c9"/><rect x="101" y="743" width="1" height="1" fill="#c9c9c9"/><rect x="173" y="743" width="1" height="1" fill="#c9c9c9"/><rect x="332" y="743" width="1" height="1" fill="#c9c9c9"/><rect x="418" y="743" width="1" height="1" fill="#c9c9c9"/><rect x="519" y="743" width="1" height="1" fill="#c9c9c9"/><rect x="605" y="743" width="1" height="1" fill="#c9c9c9"/><rect x="691" y="743" width="1" height="1" fill="#c9c9c9"/><rect x="777" y="743" width="1" height="1" fill="#c9c9c9"/><rect x="863" y="743" width="1" height="1" fill="#c9c9c9"/><rect x="949" y="743" width="1" height="1" fill="#c9c9c9"/><rect x="1035" y="743" width="1" height="1" fill="#c9c9c9"/><rect x="1123" y="743" width="1" height="1" fill="#c9c9c9"/><rect x="1208" y="743" width="1" height="1" fill="#c9c9c9"/><rect x="101" y="765" width="1" height="1" fill="#c9c9c9"/><rect x="173" y="765" width="1" height="1" fill="#c9c9c9"/><rect x="332" y="765" width="1" height="1" fill="#c9c9c9"/><rect x="418" y="765" width="1" height="1" fill="#c9c9c9"/><rect x="519" y="765" width="1" height="1" fill="#c9c9c9"/><rect x="605" y="765" width="1" height="1" fill="#c9c9c9"/><rect x="691" y="765" width="1" height="1" fill="#c9c9c9"/><rect x="777" y="765" width="1" height="1" fill="#c9c9c9"/><rect x="863" y="765" width="1" height="1" fill="#c9c9c9"/><rect x="949" y="765" width="1" height="1" fill="#c9c9c9"/><rect x="1035" y="765" width="1" height="1" fill="#c9c9c9"/><rect x="1123" y="765" width="1" height="1" fill="#c9c9c9"/><rect x="1208" y="765" width="1" height="1" fill="#c9c9c9"/><rect x="101" y="787" width="1" height="1" fill="#c9c9c9"/><rect x="173" y="787" width="1" height="1" fill="#c9c9c9"/><rect x="332" y="787" width="1" height="1" fill="#c9c9c9"/><rect x="418" y="787" width="1" height="1" fill="#c9c9c9"/><rect x="519" y="787" width="1" height="1" fill="#c9c9c9"/><rect x="605" y="787" width="1" height="1" fill="#c9c9c9"/><rect x="691" y="787" width="1" height="1" fill="#c9c9c9"/><rect x="777" y="787" width="1" height="1" fill="#c9c9c9"/><rect x="863" y="787" width="1" height="1" fill="#c9c9c9"/><rect x="949" y="787" width="1" height="1" fill="#c9c9c9"/><rect x="1035" y="787" width="1" height="1" fill="#c9c9c9"/><rect x="1123" y="787" width="1" height="1" fill="#c9c9c9"/><rect x="1208" y="787" width="1" height="1" fill="#c9c9c9"/><rect x="101" y="809" width="1" height="1" fill="#c9c9c9"/><rect x="173" y="809" width="1" height="1" fill="#c9c9c9"/><rect x="332" y="809" width="1" height="1" fill="#c9c9c9"/><rect x="418" y="809" width="1" height="1" fill="#c9c9c9"/><rect x="519" y="809" width="1" height="1" fill="#c9c9c9"/><rect x="605" y="809" width="1" height="1" fill="#c9c9c9"/><rect x="691" y="809" width="1" height="1" fill="#c9c9c9"/><rect x="777" y="809" width="1" height="1" fill="#c9c9c9"/><rect x="863" y="809" width="1" height="1" fill="#c9c9c9"/><rect x="949" y="809" width="1" height="1" fill="#c9c9c9"/><rect x="1035" y="809" width="1" height="1" fill="#c9c9c9"/><rect x="1123" y="809" width="1" height="1" fill="#c9c9c9"/><rect x="1208" y="809" width="1" height="1" fill="#c9c9c9"/><rect x="101" y="831" width="1" height="1" fill="#c9c9c9"/><rect x="173" y="831" width="1" height="1" fill="#c9c9c9"/><rect x="332" y="831" width="1" height="1" fill="#c9c9c9"/><rect x="418" y="831" width="1" height="1" fill="#c9c9c9"/><rect x="519" y="831" width="1" height="1" fill="#c9c9c9"/><rect x="605" y="831" width="1" height="1" fill="#c9c9c9"/><rect x="691" y="831" width="1" height="1" fill="#c9c9c9"/><rect x="777" y="831" width="1" height="1" fill="#c9c9c9"/><rect x="863" y="831" width="1" height="1" fill="#c9c9c9"/><rect x="949" y="831" width="1" height="1" fill="#c9c9c9"/><rect x="1035" y="831" width="1" height="1" fill="#c9c9c9"/><rect x="1123" y="831" width="1" height="1" fill="#c9c9c9"/><rect x="1208" y="831" width="1" height="1" fill="#c9c9c9"/><rect x="101" y="853" width="1" height="1" fill="#c9c9c9"/><rect x="173" y="853" width="1" height="1" fill="#c9c9c9"/><rect x="332" y="853" width="1" height="1" fill="#c9c9c9"/><rect x="418" y="853" width="1" height="1" fill="#c9c9c9"/><rect x="519" y="853" width="1" height="1" fill="#c9c9c9"/><rect x="605" y="853" width="1" height="1" fill="#c9c9c9"/><rect x="691" y="853" width="1" height="1" fill="#c9c9c9"/><rect x="777" y="853" width="1" height="1" fill="#c9c9c9"/><rect x="863" y="853" width="1" height="1" fill="#c9c9c9"/><rect x="949" y="853" width="1" height="1" fill="#c9c9c9"/><rect x="1035" y="853" width="1" height="1" fill="#c9c9c9"/><rect x="1123" y="853" width="1" height="1" fill="#c9c9c9"/><rect x="1208" y="853" width="1" height="1" fill="#c9c9c9"/><rect x="101" y="875" width="1" height="1" fill="#c9c9c9"/><rect x="173" y="875" width="1" height="1" fill="#c9c9c9"/><rect x="332" y="875" width="1" height="1" fill="#c9c9c9"/><rect x="418" y="875" width="1" height="1" fill="#c9c9c9"/><rect x="519" y="875" width="1" height="1" fill="#c9c9c9"/><rect x="605" y="875" width="1" height="1" fill="#c9c9c9"/><rect x="691" y="875" width="1" height="1" fill="#c9c9c9"/><rect x="777" y="875" width="1" height="1" fill="#c9c9c9"/><rect x="863" y="875" width="1" height="1" fill="#c9c9c9"/><rect x="949" y="875" width="1" height="1" fill="#c9c9c9"/><rect x="1035" y="875" width="1" height="1" fill="#c9c9c9"/><rect x="1123" y="875" width="1" height="1" fill="#c9c9c9"/><rect x="1208" y="875" width="1" height="1" fill="#c9c9c9"/><rect x="29" y="83" width="1506" height="1" fill="#9e9e9e"/><rect x="8" y="83" width="21" height="1" fill="#d6d6d6"/><rect x="29" y="84" width="1" height="793" fill="#9e9e9e"/><rect x="29" y="64" width="1" height="19" fill="#d6d6d6"/><path d="M26 69 L26 80 L15 80 Z" fill="#d8d8d8" shape-rendering="geometricPrecision"/><rect x="173" y="65" width="1" height="18" fill="#b8b8b8"/><rect x="332" y="65" width="1" height="18" fill="#b8b8b8"/><rect x="173" y="82" width="160" height="2" fill="#107c41"/><rect x="2" y="259" width="27" height="1" fill="#c8c8c8"/><rect x="2" y="281" width="27" height="1" fill="#c8c8c8"/><rect x="28" y="259" width="2" height="23" fill="#107c41"/><rect x="173" y="259" width="160" height="23" fill="none" stroke="#107c41" stroke-width="2"/><rect x="329" y="278" width="7" height="7" fill="#fff"/><rect x="330" y="279" width="5" height="5" fill="#107c41"/></svg>
<div class="h" style="left:60.07px;top:64.50px;transform:scaleX(1.0848);color:#3a3a3a">A</div>
<div class="h" style="left:133.29px;top:64.50px;transform:scaleX(0.8415);color:#3a3a3a">B</div>
<div class="h" style="left:247.04px;top:64.50px;transform:scaleX(1.1010);color:#107c41">C</div>
<div class="h" style="left:370.04px;top:64.50px;transform:scaleX(1.0076);color:#3a3a3a">D</div>
<div class="h" style="left:465.07px;top:64.50px;transform:scaleX(0.7858);color:#3a3a3a">E</div>
<div class="h" style="left:558.94px;top:64.50px;transform:scaleX(0.7762);color:#3a3a3a">F</div>
<div class="h" style="left:642.11px;top:64.50px;transform:scaleX(1.0959);color:#3a3a3a">G</div>
<div class="h" style="left:729.49px;top:64.50px;transform:scaleX(0.9250);color:#3a3a3a">H</div>
<div class="h" style="left:818.84px;top:64.50px;transform:scaleX(0.7949);color:#3a3a3a">I</div>
<div class="h" style="left:902.97px;top:64.50px;transform:scaleX(0.9426);color:#3a3a3a">J</div>
<div class="h" style="left:988.17px;top:64.50px;transform:scaleX(0.8664);color:#3a3a3a">K</div>
<div class="h" style="left:1076.11px;top:64.50px;transform:scaleX(0.8125);color:#3a3a3a">L</div>
<div class="h" style="left:1159.26px;top:64.50px;transform:scaleX(1.0787);color:#3a3a3a">M</div>
<div class="h" style="left:1366.07px;top:64.50px;transform:scaleX(1.0022);color:#3a3a3a">N</div>
<div class="t" style="left:10.94px;top:84.00px;transform:scaleX(0.9743);color:#3a3a3a">1</div>
<div class="t" style="left:10.94px;top:106.00px;transform:scaleX(0.9743);color:#3a3a3a">2</div>
<div class="t" style="left:10.94px;top:128.00px;transform:scaleX(0.9743);color:#3a3a3a">3</div>
<div class="t" style="left:10.94px;top:150.00px;transform:scaleX(0.9743);color:#3a3a3a">4</div>
<div class="t" style="left:10.94px;top:172.00px;transform:scaleX(0.9743);color:#3a3a3a">5</div>
<div class="t" style="left:10.94px;top:194.00px;transform:scaleX(0.9743);color:#3a3a3a">6</div>
<div class="t" style="left:10.94px;top:216.00px;transform:scaleX(0.9743);color:#3a3a3a">7</div>
<div class="t" style="left:10.94px;top:238.00px;transform:scaleX(0.9743);color:#3a3a3a">8</div>
<div class="t" style="left:10.94px;top:260.00px;transform:scaleX(0.9743);color:#107c41">9</div>
<div class="t" style="left:6.87px;top:282.00px;transform:scaleX(0.9743);color:#3a3a3a">10</div>
<div class="t" style="left:6.87px;top:304.00px;transform:scaleX(1.0437);color:#3a3a3a">11</div>
<div class="t" style="left:6.87px;top:326.00px;transform:scaleX(0.9743);color:#3a3a3a">12</div>
<div class="t" style="left:6.87px;top:348.00px;transform:scaleX(0.9743);color:#3a3a3a">13</div>
<div class="t" style="left:6.87px;top:370.00px;transform:scaleX(0.9743);color:#3a3a3a">14</div>
<div class="t" style="left:6.87px;top:392.00px;transform:scaleX(0.9743);color:#3a3a3a">15</div>
<div class="t" style="left:6.87px;top:414.00px;transform:scaleX(0.9743);color:#3a3a3a">16</div>
<div class="t" style="left:6.87px;top:436.00px;transform:scaleX(0.9743);color:#3a3a3a">17</div>
<div class="t" style="left:6.87px;top:458.00px;transform:scaleX(0.9743);color:#3a3a3a">18</div>
<div class="t" style="left:6.87px;top:480.00px;transform:scaleX(0.9743);color:#3a3a3a">19</div>
<div class="t" style="left:6.87px;top:502.00px;transform:scaleX(0.9743);color:#3a3a3a">20</div>
<div class="t" style="left:6.87px;top:524.00px;transform:scaleX(0.9743);color:#3a3a3a">21</div>
<div class="t" style="left:6.87px;top:546.00px;transform:scaleX(0.9743);color:#3a3a3a">22</div>
<div class="t" style="left:6.87px;top:568.00px;transform:scaleX(0.9743);color:#3a3a3a">23</div>
<div class="t" style="left:6.87px;top:590.00px;transform:scaleX(0.9743);color:#3a3a3a">24</div>
<div class="t" style="left:6.87px;top:612.00px;transform:scaleX(0.9743);color:#3a3a3a">25</div>
<div class="t" style="left:6.87px;top:634.00px;transform:scaleX(0.9743);color:#3a3a3a">26</div>
<div class="t" style="left:6.87px;top:656.00px;transform:scaleX(0.9743);color:#3a3a3a">27</div>
<div class="t" style="left:6.87px;top:678.00px;transform:scaleX(0.9743);color:#3a3a3a">28</div>
<div class="t" style="left:6.87px;top:700.00px;transform:scaleX(0.9743);color:#3a3a3a">29</div>
<div class="t" style="left:6.87px;top:722.00px;transform:scaleX(0.9743);color:#3a3a3a">30</div>
<div class="t" style="left:6.87px;top:744.00px;transform:scaleX(0.9743);color:#3a3a3a">31</div>
<div class="t" style="left:6.87px;top:766.00px;transform:scaleX(0.9743);color:#3a3a3a">32</div>
<div class="t" style="left:6.87px;top:788.00px;transform:scaleX(0.9743);color:#3a3a3a">33</div>
<div class="t" style="left:6.87px;top:810.00px;transform:scaleX(0.9743);color:#3a3a3a">34</div>
<div class="t" style="left:6.87px;top:832.00px;transform:scaleX(0.9743);color:#3a3a3a">35</div>
<div class="t" style="left:6.87px;top:854.00px;transform:scaleX(0.9743);color:#3a3a3a">36</div>
<div class="t" style="left:335.60px;top:84.00px;transform:scaleX(1.0008)">ATM</div>
<div class="t" style="left:544.24px;top:84.00px;transform:scaleX(0.9526)">Strike</div>
<div class="t" style="left:614.05px;top:84.00px;transform:scaleX(0.9612)">Last (CLE)</div>
<div class="t" style="left:335.60px;top:106.00px;transform:scaleX(0.9467)">C.US.CLEN256500</div>
<div class="t" style="left:546.25px;top:106.00px;transform:scaleX(0.9738)">6500</div>
<div class="t" style="left:630.22px;top:106.00px;transform:scaleX(0.9743)">64.77</div>
<div class="t" style="left:349.77px;top:150.00px;transform:scaleX(1.0288)">Symbol</div>
<div class="t" style="left:434.64px;top:150.00px;transform:scaleX(1.0304)">Expiration</div>
<div class="t" style="left:544.24px;top:150.00px;transform:scaleX(0.9526)">Strike</div>
<div class="t" style="left:632.59px;top:150.00px;transform:scaleX(1.0310)">Step</div>
<div class="t" style="left:234.52px;top:172.00px;transform:scaleX(0.9239)">C.US.</div>
<div class="t" style="left:362.22px;top:172.00px;transform:scaleX(0.9104)">CLE</div>
<div class="t" style="left:455.45px;top:172.00px;transform:scaleX(0.9853)">N25</div>
<div class="t" style="left:546.25px;top:172.00px;transform:scaleX(0.9738)">6250</div>
<div class="t" style="left:640.37px;top:172.00px;transform:scaleX(0.9743)">50</div>
<div class="t" style="left:349.77px;top:524.00px;transform:scaleX(1.0288)">Symbol</div>
<div class="t" style="left:434.64px;top:524.00px;transform:scaleX(1.0304)">Expiration</div>
<div class="t" style="left:544.24px;top:524.00px;transform:scaleX(0.9526)">Strike</div>
<div class="t" style="left:632.59px;top:524.00px;transform:scaleX(1.0310)">Step</div>
<div class="t" style="left:236.14px;top:546.00px;transform:scaleX(0.9053)">P.US.</div>
<div class="t" style="left:362.22px;top:546.00px;transform:scaleX(0.9104)">CLE</div>
<div class="t" style="left:455.45px;top:546.00px;transform:scaleX(0.9853)">N25</div>
<div class="t" style="left:546.25px;top:546.00px;transform:scaleX(0.9738)">6250</div>
<div class="t" style="left:640.37px;top:546.00px;transform:scaleX(0.9743)">50</div>
<div class="t" style="left:336.84px;top:216.00px;transform:scaleX(1.0538)">Last Quote</div>
<div class="t" style="left:440.56px;top:216.00px;transform:scaleX(1.0182)">Net Last</div>
<div class="t" style="left:530.33px;top:216.00px;transform:scaleX(1.1351)">Contract</div>
<div class="t" style="left:637.80px;top:216.00px;transform:scaleX(0.9873)">Bid</div>
<div class="t" style="left:720.19px;top:216.00px;transform:scaleX(0.9534)">Best</div>
<div class="t" style="left:806.19px;top:216.00px;transform:scaleX(0.9534)">Best</div>
<div class="t" style="left:894.55px;top:216.00px;transform:scaleX(0.9550)">Ask</div>
<div class="t" style="left:1053.24px;top:216.00px;transform:scaleX(1.0861)">Implied</div>
<div class="t" style="left:1131.64px;top:216.00px;transform:scaleX(1.0304)">Expiration</div>
<div class="t" style="left:353.61px;top:238.00px;transform:scaleX(1.0940)">Today</div>
<div class="t" style="left:422.18px;top:238.00px;transform:scaleX(1.1046)">Quote Today</div>
<div class="t" style="left:534.98px;top:238.00px;transform:scaleX(1.1004)">Volume</div>
<div class="t" style="left:620.98px;top:238.00px;transform:scaleX(1.1004)">Volume</div>
<div class="t" style="left:723.80px;top:238.00px;transform:scaleX(0.9873)">Bid</div>
<div class="t" style="left:808.55px;top:238.00px;transform:scaleX(0.9550)">Ask</div>
<div class="t" style="left:878.98px;top:238.00px;transform:scaleX(1.1004)">Volume</div>
<div class="t" style="left:973.32px;top:238.00px;transform:scaleX(1.0955)">Delta</div>
<div class="t" style="left:1051.24px;top:238.00px;transform:scaleX(1.0936)">Volatilty</div>
<div class="t" style="left:1148.28px;top:238.00px;transform:scaleX(1.1185)">Date</div>
<div class="t" style="left:1312.15px;top:238.00px;transform:scaleX(1.0545)">Long Description</div>
<div class="t" style="left:336.84px;top:590.00px;transform:scaleX(1.0538)">Last Quote</div>
<div class="t" style="left:440.56px;top:590.00px;transform:scaleX(1.0182)">Net Last</div>
<div class="t" style="left:530.33px;top:590.00px;transform:scaleX(1.1351)">Contract</div>
<div class="t" style="left:637.80px;top:590.00px;transform:scaleX(0.9873)">Bid</div>
<div class="t" style="left:720.19px;top:590.00px;transform:scaleX(0.9534)">Best</div>
<div class="t" style="left:806.19px;top:590.00px;transform:scaleX(0.9534)">Best</div>
<div class="t" style="left:894.55px;top:590.00px;transform:scaleX(0.9550)">Ask</div>
<div class="t" style="left:1053.24px;top:590.00px;transform:scaleX(1.0861)">Implied</div>
<div class="t" style="left:1131.64px;top:590.00px;transform:scaleX(1.0304)">Expiration</div>
<div class="t" style="left:353.61px;top:612.00px;transform:scaleX(1.0940)">Today</div>
<div class="t" style="left:422.18px;top:612.00px;transform:scaleX(1.1046)">Quote Today</div>
<div class="t" style="left:534.98px;top:612.00px;transform:scaleX(1.1004)">Volume</div>
<div class="t" style="left:620.98px;top:612.00px;transform:scaleX(1.1004)">Volume</div>
<div class="t" style="left:723.80px;top:612.00px;transform:scaleX(0.9873)">Bid</div>
<div class="t" style="left:808.55px;top:612.00px;transform:scaleX(0.9550)">Ask</div>
<div class="t" style="left:878.98px;top:612.00px;transform:scaleX(1.1004)">Volume</div>
<div class="t" style="left:973.32px;top:612.00px;transform:scaleX(1.0955)">Delta</div>
<div class="t" style="left:1051.24px;top:612.00px;transform:scaleX(1.0936)">Volatilty</div>
<div class="t" style="left:1148.28px;top:612.00px;transform:scaleX(1.1185)">Date</div>
<div class="t" style="left:1312.15px;top:612.00px;transform:scaleX(1.0545)">Long Description</div>
<div class="t" style="left:191.44px;top:260.00px;transform:scaleX(0.9467)">C.US.CLEN256250</div>
<div class="t" style="left:387.56px;top:260.00px;transform:scaleX(0.9743)">2.68</div>
<div class="t" style="left:488.56px;top:260.00px;transform:scaleX(0.9743)">0.15</div>
<div class="t" style="left:594.87px;top:260.00px;transform:scaleX(0.9743)">4</div>
<div class="t" style="left:664.62px;top:260.00px;transform:scaleX(0.9743)">149</div>
<div class="t" style="left:746.56px;top:260.00px;transform:scaleX(0.9743)">2.61</div>
<div class="t" style="left:832.56px;top:260.00px;transform:scaleX(0.9743)">2.68</div>
<div class="t" style="left:930.75px;top:260.00px;transform:scaleX(0.9743)">72</div>
<div class="t" style="left:996.44px;top:260.00px;transform:scaleX(0.9743)">77.62</div>
<div class="t" style="left:1084.44px;top:260.00px;transform:scaleX(0.9743)">33.87</div>
<div class="t" style="left:1136.30px;top:260.00px;transform:scaleX(1.0444)">6/16/2025</div>
<div class="t" style="left:1239.01px;top:260.00px;transform:scaleX(1.0386)">Crude Light (Globex), Jul 25 6250 Call</div>
<div class="t" style="left:191.44px;top:282.00px;transform:scaleX(0.9467)">C.US.CLEN256300</div>
<div class="t" style="left:387.56px;top:282.00px;transform:scaleX(0.9743)">2.24</div>
<div class="t" style="left:488.56px;top:282.00px;transform:scaleX(0.9743)">0.09</div>
<div class="t" style="left:578.62px;top:282.00px;transform:scaleX(0.9743)">157</div>
<div class="t" style="left:680.87px;top:282.00px;transform:scaleX(0.9743)">1</div>
<div class="t" style="left:746.56px;top:282.00px;transform:scaleX(0.9743)">2.24</div>
<div class="t" style="left:832.56px;top:282.00px;transform:scaleX(0.9743)">2.28</div>
<div class="t" style="left:938.87px;top:282.00px;transform:scaleX(0.9743)">1</div>
<div class="t" style="left:996.44px;top:282.00px;transform:scaleX(0.9743)">73.93</div>
<div class="t" style="left:1084.44px;top:282.00px;transform:scaleX(0.9743)">31.25</div>
<div class="t" style="left:1136.30px;top:282.00px;transform:scaleX(1.0444)">6/16/2025</div>
<div class="t" style="left:1239.01px;top:282.00px;transform:scaleX(1.0386)">Crude Light (Globex), Jul 25 6300 Call</div>
<div class="t" style="left:191.44px;top:304.00px;transform:scaleX(0.9467)">C.US.CLEN256350</div>
<div class="t" style="left:387.56px;top:304.00px;transform:scaleX(0.9743)">1.89</div>
<div class="t" style="left:488.56px;top:304.00px;transform:scaleX(0.9743)">0.08</div>
<div class="t" style="left:586.75px;top:304.00px;transform:scaleX(0.9743)">15</div>
<div class="t" style="left:680.87px;top:304.00px;transform:scaleX(0.9743)">2</div>
<div class="t" style="left:746.56px;top:304.00px;transform:scaleX(0.9743)">1.89</div>
<div class="t" style="left:832.56px;top:304.00px;transform:scaleX(0.9743)">1.93</div>
<div class="t" style="left:930.75px;top:304.00px;transform:scaleX(0.9743)">62</div>
<div class="t" style="left:996.44px;top:304.00px;transform:scaleX(0.9743)">67.82</div>
<div class="t" style="left:1084.44px;top:304.00px;transform:scaleX(0.9743)">31.38</div>
<div class="t" style="left:1136.30px;top:304.00px;transform:scaleX(1.0444)">6/16/2025</div>
<div class="t" style="left:1239.01px;top:304.00px;transform:scaleX(1.0386)">Crude Light (Globex), Jul 25 6350 Call</div>
<div class="t" style="left:191.44px;top:326.00px;transform:scaleX(0.9467)">C.US.CLEN256400</div>
<div class="t" style="left:387.56px;top:326.00px;transform:scaleX(0.9743)">1.61</div>
<div class="t" style="left:488.56px;top:326.00px;transform:scaleX(1.0128)">0.11</div>
<div class="t" style="left:578.62px;top:326.00px;transform:scaleX(0.9743)">161</div>
<div class="t" style="left:680.87px;top:326.00px;transform:scaleX(0.9743)">2</div>
<div class="t" style="left:746.56px;top:326.00px;transform:scaleX(0.9743)">1.57</div>
<div class="t" style="left:832.56px;top:326.00px;transform:scaleX(0.9743)">1.61</div>
<div class="t" style="left:930.75px;top:326.00px;transform:scaleX(0.9743)">85</div>
<div class="t" style="left:996.44px;top:326.00px;transform:scaleX(0.9743)">61.42</div>
<div class="t" style="left:1084.44px;top:326.00px;transform:scaleX(0.9743)">32.36</div>
<div class="t" style="left:1136.30px;top:326.00px;transform:scaleX(1.0444)">6/16/2025</div>
<div class="t" style="left:1239.01px;top:326.00px;transform:scaleX(1.0386)">Crude Light (Globex), Jul 25 6400 Call</div>
<div class="t" style="left:191.44px;top:348.00px;transform:scaleX(0.9467)">C.US.CLEN256450</div>
<div class="t" style="left:387.56px;top:348.00px;transform:scaleX(0.9743)">1.29</div>
<div class="t" style="left:488.56px;top:348.00px;transform:scaleX(0.9743)">0.07</div>
<div class="t" style="left:586.75px;top:348.00px;transform:scaleX(0.9743)">46</div>
<div class="t" style="left:680.87px;top:348.00px;transform:scaleX(0.9743)">1</div>
<div class="t" style="left:746.56px;top:348.00px;transform:scaleX(0.9743)">1.29</div>
<div class="t" style="left:832.56px;top:348.00px;transform:scaleX(0.9743)">1.32</div>
<div class="t" style="left:922.62px;top:348.00px;transform:scaleX(1.0195)">115</div>
<div class="t" style="left:996.44px;top:348.00px;transform:scaleX(0.9743)">54.49</div>
<div class="t" style="left:1084.44px;top:348.00px;transform:scaleX(0.9743)">31.26</div>
<div class="t" style="left:1136.30px;top:348.00px;transform:scaleX(1.0444)">6/16/2025</div>
<div class="t" style="left:1239.01px;top:348.00px;transform:scaleX(1.0386)">Crude Light (Globex), Jul 25 6450 Call</div>
<div class="t" style="left:191.44px;top:370.00px;transform:scaleX(0.9467)">C.US.CLEN256500</div>
<div class="t" style="left:387.56px;top:370.00px;transform:scaleX(0.9743)">1.04</div>
<div class="t" style="left:488.56px;top:370.00px;transform:scaleX(0.9743)">0.05</div>
<div class="t" style="left:578.62px;top:370.00px;transform:scaleX(0.9743)">583</div>
<div class="t" style="left:664.62px;top:370.00px;transform:scaleX(0.9743)">205</div>
<div class="t" style="left:746.56px;top:370.00px;transform:scaleX(0.9743)">1.04</div>
<div class="t" style="left:832.56px;top:370.00px;transform:scaleX(0.9743)">1.06</div>
<div class="t" style="left:938.87px;top:370.00px;transform:scaleX(0.9743)">4</div>
<div class="t" style="left:996.44px;top:370.00px;transform:scaleX(0.9743)">47.67</div>
<div class="t" style="left:1084.44px;top:370.00px;transform:scaleX(0.9743)">31.17</div>
<div class="t" style="left:1136.30px;top:370.00px;transform:scaleX(1.0444)">6/16/2025</div>
<div class="t" style="left:1239.01px;top:370.00px;transform:scaleX(1.0386)">Crude Light (Globex), Jul 25 6500 Call</div>
<div class="t" style="left:191.44px;top:392.00px;transform:scaleX(0.9467)">C.US.CLEN256550</div>
<div class="t" style="left:387.56px;top:392.00px;transform:scaleX(0.9743)">0.83</div>
<div class="t" style="left:488.56px;top:392.00px;transform:scaleX(0.9743)">0.04</div>
<div class="t" style="left:578.62px;top:392.00px;transform:scaleX(0.9743)">101</div>
<div class="t" style="left:664.62px;top:392.00px;transform:scaleX(0.9743)">305</div>
<div class="t" style="left:746.56px;top:392.00px;transform:scaleX(0.9743)">0.83</div>
<div class="t" style="left:832.56px;top:392.00px;transform:scaleX(0.9743)">0.85</div>
<div class="t" style="left:922.62px;top:392.00px;transform:scaleX(1.0195)">112</div>
<div class="t" style="left:996.44px;top:392.00px;transform:scaleX(0.9743)">40.91</div>
<div class="t" style="left:1084.44px;top:392.00px;transform:scaleX(0.9743)">31.25</div>
<div class="t" style="left:1136.30px;top:392.00px;transform:scaleX(1.0444)">6/16/2025</div>
<div class="t" style="left:1239.01px;top:392.00px;transform:scaleX(1.0386)">Crude Light (Globex), Jul 25 6550 Call</div>
<div class="t" style="left:191.44px;top:414.00px;transform:scaleX(0.9467)">C.US.CLEN256600</div>
<div class="t" style="left:387.56px;top:414.00px;transform:scaleX(0.9743)">0.68</div>
<div class="t" style="left:488.56px;top:414.00px;transform:scaleX(0.9743)">0.06</div>
<div class="t" style="left:578.62px;top:414.00px;transform:scaleX(0.9743)">725</div>
<div class="t" style="left:672.75px;top:414.00px;transform:scaleX(0.9743)">19</div>
<div class="t" style="left:746.56px;top:414.00px;transform:scaleX(0.9743)">0.66</div>
<div class="t" style="left:832.56px;top:414.00px;transform:scaleX(0.9743)">0.68</div>
<div class="t" style="left:922.62px;top:414.00px;transform:scaleX(0.9743)">250</div>
<div class="t" style="left:1004.56px;top:414.00px;transform:scaleX(0.9743)">34.9</div>
<div class="t" style="left:1084.44px;top:414.00px;transform:scaleX(0.9743)">32.12</div>
<div class="t" style="left:1136.30px;top:414.00px;transform:scaleX(1.0444)">6/16/2025</div>
<div class="t" style="left:1239.01px;top:414.00px;transform:scaleX(1.0386)">Crude Light (Globex), Jul 25 6600 Call</div>
<div class="t" style="left:191.44px;top:436.00px;transform:scaleX(0.9467)">C.US.CLEN256650</div>
<div class="t" style="left:387.56px;top:436.00px;transform:scaleX(0.9743)">0.53</div>
<div class="t" style="left:488.56px;top:436.00px;transform:scaleX(0.9743)">0.05</div>
<div class="t" style="left:578.62px;top:436.00px;transform:scaleX(0.9743)">224</div>
<div class="t" style="left:664.62px;top:436.00px;transform:scaleX(0.9743)">453</div>
<div class="t" style="left:746.56px;top:436.00px;transform:scaleX(0.9743)">0.51</div>
<div class="t" style="left:832.56px;top:436.00px;transform:scaleX(0.9743)">0.53</div>
<div class="t" style="left:922.62px;top:436.00px;transform:scaleX(0.9743)">100</div>
<div class="t" style="left:996.44px;top:436.00px;transform:scaleX(0.9743)">29.06</div>
<div class="t" style="left:1084.44px;top:436.00px;transform:scaleX(0.9743)">32.17</div>
<div class="t" style="left:1136.30px;top:436.00px;transform:scaleX(1.0444)">6/16/2025</div>
<div class="t" style="left:1239.01px;top:436.00px;transform:scaleX(1.0386)">Crude Light (Globex), Jul 25 6650 Call</div>
<div class="t" style="left:191.44px;top:458.00px;transform:scaleX(0.9467)">C.US.CLEN256700</div>
<div class="t" style="left:387.56px;top:458.00px;transform:scaleX(0.9743)">0.42</div>
<div class="t" style="left:488.56px;top:458.00px;transform:scaleX(0.9743)">0.05</div>
<div class="t" style="left:578.62px;top:458.00px;transform:scaleX(0.9743)">407</div>
<div class="t" style="left:664.62px;top:458.00px;transform:scaleX(0.9743)">334</div>
<div class="t" style="left:754.69px;top:458.00px;transform:scaleX(0.9743)">0.4</div>
<div class="t" style="left:832.56px;top:458.00px;transform:scaleX(0.9743)">0.42</div>
<div class="t" style="left:922.62px;top:458.00px;transform:scaleX(0.9743)">442</div>
<div class="t" style="left:1004.56px;top:458.00px;transform:scaleX(0.9743)">23.6</div>
<div class="t" style="left:1084.44px;top:458.00px;transform:scaleX(0.9743)">32.67</div>
<div class="t" style="left:1136.30px;top:458.00px;transform:scaleX(1.0444)">6/16/2025</div>
<div class="t" style="left:1239.01px;top:458.00px;transform:scaleX(1.0386)">Crude Light (Globex), Jul 25 6700 Call</div>
<div class="t" style="left:191.44px;top:480.00px;transform:scaleX(0.9467)">C.US.CLEN256750</div>
<div class="t" style="left:387.56px;top:480.00px;transform:scaleX(0.9743)">0.33</div>
<div class="t" style="left:488.56px;top:480.00px;transform:scaleX(0.9743)">0.05</div>
<div class="t" style="left:586.75px;top:480.00px;transform:scaleX(0.9743)">41</div>
<div class="t" style="left:664.62px;top:480.00px;transform:scaleX(0.9743)">335</div>
<div class="t" style="left:746.56px;top:480.00px;transform:scaleX(0.9743)">0.31</div>
<div class="t" style="left:832.56px;top:480.00px;transform:scaleX(0.9743)">0.33</div>
<div class="t" style="left:922.62px;top:480.00px;transform:scaleX(0.9743)">478</div>
<div class="t" style="left:996.44px;top:480.00px;transform:scaleX(0.9743)">19.18</div>
<div class="t" style="left:1084.44px;top:480.00px;transform:scaleX(0.9743)">33.14</div>
<div class="t" style="left:1136.30px;top:480.00px;transform:scaleX(1.0444)">6/16/2025</div>
<div class="t" style="left:1239.01px;top:480.00px;transform:scaleX(1.0386)">Crude Light (Globex), Jul 25 6750 Call</div>
<div class="t" style="left:176.60px;top:634.00px;transform:scaleX(0.9417)">P.US.CLEN256250</div>
<div class="t" style="left:387.56px;top:634.00px;transform:scaleX(0.9743)">0.39</div>
<div class="t" style="left:483.69px;top:634.00px;transform:scaleX(0.9744)">-0.06</div>
<div class="t" style="left:586.75px;top:634.00px;transform:scaleX(0.9743)">35</div>
<div class="t" style="left:680.87px;top:634.00px;transform:scaleX(0.9743)">5</div>
<div class="t" style="left:746.56px;top:634.00px;transform:scaleX(0.9743)">0.37</div>
<div class="t" style="left:832.56px;top:634.00px;transform:scaleX(0.9743)">0.39</div>
<div class="t" style="left:922.62px;top:634.00px;transform:scaleX(0.9743)">645</div>
<div class="t" style="left:991.57px;top:634.00px;transform:scaleX(0.9744)">-21.78</div>
<div class="t" style="left:1084.44px;top:634.00px;transform:scaleX(0.9743)">33.07</div>
<div class="t" style="left:1136.30px;top:634.00px;transform:scaleX(1.0444)">6/16/2025</div>
<div class="t" style="left:1241.62px;top:634.00px;transform:scaleX(1.0315)">Crude Light (Globex), Jul 25 6250 Put</div>
<div class="t" style="left:176.60px;top:656.00px;transform:scaleX(0.9417)">P.US.CLEN256300</div>
<div class="t" style="left:395.69px;top:656.00px;transform:scaleX(0.9743)">0.5</div>
<div class="t" style="left:483.69px;top:656.00px;transform:scaleX(0.9744)">-0.07</div>
<div class="t" style="left:578.62px;top:656.00px;transform:scaleX(0.9743)">317</div>
<div class="t" style="left:664.62px;top:656.00px;transform:scaleX(0.9743)">257</div>
<div class="t" style="left:746.56px;top:656.00px;transform:scaleX(0.9743)">0.48</div>
<div class="t" style="left:840.69px;top:656.00px;transform:scaleX(0.9743)">0.5</div>
<div class="t" style="left:922.62px;top:656.00px;transform:scaleX(0.9743)">436</div>
<div class="t" style="left:991.57px;top:656.00px;transform:scaleX(0.9744)">-26.69</div>
<div class="t" style="left:1084.44px;top:656.00px;transform:scaleX(0.9743)">32.43</div>
<div class="t" style="left:1136.30px;top:656.00px;transform:scaleX(1.0444)">6/16/2025</div>
<div class="t" style="left:1241.62px;top:656.00px;transform:scaleX(1.0315)">Crude Light (Globex), Jul 25 6300 Put</div>
<div class="t" style="left:176.60px;top:678.00px;transform:scaleX(0.9417)">P.US.CLEN256350</div>
<div class="t" style="left:387.56px;top:678.00px;transform:scaleX(0.9743)">0.62</div>
<div class="t" style="left:483.69px;top:678.00px;transform:scaleX(1.0071)">-0.11</div>
<div class="t" style="left:578.62px;top:678.00px;transform:scaleX(0.9743)">134</div>
<div class="t" style="left:664.62px;top:678.00px;transform:scaleX(0.9743)">305</div>
<div class="t" style="left:746.56px;top:678.00px;transform:scaleX(0.9743)">0.62</div>
<div class="t" style="left:832.56px;top:678.00px;transform:scaleX(0.9743)">0.64</div>
<div class="t" style="left:922.62px;top:678.00px;transform:scaleX(0.9743)">165</div>
<div class="t" style="left:991.57px;top:678.00px;transform:scaleX(0.9744)">-32.41</div>
<div class="t" style="left:1084.44px;top:678.00px;transform:scaleX(0.9743)">31.35</div>
<div class="t" style="left:1136.30px;top:678.00px;transform:scaleX(1.0444)">6/16/2025</div>
<div class="t" style="left:1241.62px;top:678.00px;transform:scaleX(1.0315)">Crude Light (Globex), Jul 25 6350 Put</div>
<div class="t" style="left:176.60px;top:700.00px;transform:scaleX(0.9417)">P.US.CLEN256400</div>
<div class="t" style="left:387.56px;top:700.00px;transform:scaleX(0.9743)">0.82</div>
<div class="t" style="left:491.82px;top:700.00px;transform:scaleX(0.9744)">-0.1</div>
<div class="t" style="left:578.62px;top:700.00px;transform:scaleX(0.9743)">242</div>
<div class="t" style="left:664.62px;top:700.00px;transform:scaleX(0.9743)">136</div>
<div class="t" style="left:754.69px;top:700.00px;transform:scaleX(0.9743)">0.8</div>
<div class="t" style="left:832.56px;top:700.00px;transform:scaleX(0.9743)">0.82</div>
<div class="t" style="left:922.62px;top:700.00px;transform:scaleX(0.9743)">121</div>
<div class="t" style="left:991.57px;top:700.00px;transform:scaleX(0.9744)">-38.53</div>
<div class="t" style="left:1084.44px;top:700.00px;transform:scaleX(0.9743)">31.78</div>
<div class="t" style="left:1136.30px;top:700.00px;transform:scaleX(1.0444)">6/16/2025</div>
<div class="t" style="left:1241.62px;top:700.00px;transform:scaleX(1.0315)">Crude Light (Globex), Jul 25 6400 Put</div>
<div class="t" style="left:176.60px;top:722.00px;transform:scaleX(0.9417)">P.US.CLEN256450</div>
<div class="t" style="left:387.56px;top:722.00px;transform:scaleX(0.9743)">1.03</div>
<div class="t" style="left:483.69px;top:722.00px;transform:scaleX(1.0071)">-0.11</div>
<div class="t" style="left:578.62px;top:722.00px;transform:scaleX(0.9743)">276</div>
<div class="t" style="left:664.62px;top:722.00px;transform:scaleX(0.9743)">176</div>
<div class="t" style="left:746.56px;top:722.00px;transform:scaleX(0.9743)">1.01</div>
<div class="t" style="left:832.56px;top:722.00px;transform:scaleX(0.9743)">1.03</div>
<div class="t" style="left:938.87px;top:722.00px;transform:scaleX(0.9743)">4</div>
<div class="t" style="left:991.57px;top:722.00px;transform:scaleX(0.9744)">-45.37</div>
<div class="t" style="left:1084.44px;top:722.00px;transform:scaleX(0.9743)">31.53</div>
<div class="t" style="left:1136.30px;top:722.00px;transform:scaleX(1.0444)">6/16/2025</div>
<div class="t" style="left:1241.62px;top:722.00px;transform:scaleX(1.0315)">Crude Light (Globex), Jul 25 6450 Put</div>
<div class="t" style="left:176.60px;top:744.00px;transform:scaleX(0.9417)">P.US.CLEN256500</div>
<div class="t" style="left:387.56px;top:744.00px;transform:scaleX(0.9743)">1.29</div>
<div class="t" style="left:483.69px;top:744.00px;transform:scaleX(0.9744)">-0.12</div>
<div class="t" style="left:586.75px;top:744.00px;transform:scaleX(0.9743)">47</div>
<div class="t" style="left:664.62px;top:744.00px;transform:scaleX(0.9743)">125</div>
<div class="t" style="left:746.56px;top:744.00px;transform:scaleX(0.9743)">1.26</div>
<div class="t" style="left:832.56px;top:744.00px;transform:scaleX(0.9743)">1.29</div>
<div class="t" style="left:930.75px;top:744.00px;transform:scaleX(0.9743)">38</div>
<div class="t" style="left:991.57px;top:744.00px;transform:scaleX(0.9744)">-52.28</div>
<div class="t" style="left:1084.44px;top:744.00px;transform:scaleX(0.9743)">31.72</div>
<div class="t" style="left:1136.30px;top:744.00px;transform:scaleX(1.0444)">6/16/2025</div>
<div class="t" style="left:1241.62px;top:744.00px;transform:scaleX(1.0315)">Crude Light (Globex), Jul 25 6500 Put</div>
<div class="t" style="left:176.60px;top:766.00px;transform:scaleX(0.9417)">P.US.CLEN256550</div>
<div class="t" style="left:387.56px;top:766.00px;transform:scaleX(0.9743)">1.54</div>
<div class="t" style="left:483.69px;top:766.00px;transform:scaleX(0.9744)">-0.17</div>
<div class="t" style="left:594.87px;top:766.00px;transform:scaleX(0.9743)">3</div>
<div class="t" style="left:680.87px;top:766.00px;transform:scaleX(0.9743)">3</div>
<div class="t" style="left:746.56px;top:766.00px;transform:scaleX(0.9743)">1.54</div>
<div class="t" style="left:832.56px;top:766.00px;transform:scaleX(0.9743)">1.58</div>
<div class="t" style="left:938.87px;top:766.00px;transform:scaleX(0.9743)">4</div>
<div class="t" style="left:991.57px;top:766.00px;transform:scaleX(0.9744)">-58.81</div>
<div class="t" style="left:1084.44px;top:766.00px;transform:scaleX(0.9743)">30.71</div>
<div class="t" style="left:1136.30px;top:766.00px;transform:scaleX(1.0444)">6/16/2025</div>
<div class="t" style="left:1241.62px;top:766.00px;transform:scaleX(1.0315)">Crude Light (Globex), Jul 25 6550 Put</div>
<div class="t" style="left:176.60px;top:788.00px;transform:scaleX(0.9417)">P.US.CLEN256600</div>
<div class="t" style="left:387.56px;top:788.00px;transform:scaleX(0.9743)">1.91</div>
<div class="t" style="left:483.69px;top:788.00px;transform:scaleX(0.9744)">-0.13</div>
<div class="t" style="left:586.75px;top:788.00px;transform:scaleX(1.0437)">11</div>
<div class="t" style="left:680.87px;top:788.00px;transform:scaleX(0.9743)">2</div>
<div class="t" style="left:746.56px;top:788.00px;transform:scaleX(0.9743)">1.87</div>
<div class="t" style="left:832.56px;top:788.00px;transform:scaleX(0.9743)">1.91</div>
<div class="t" style="left:938.87px;top:788.00px;transform:scaleX(0.9743)">2</div>
<div class="t" style="left:1011.88px;top:788.00px;transform:scaleX(0.9744)">-65</div>
<div class="t" style="left:1084.44px;top:788.00px;transform:scaleX(0.9743)">32.15</div>
<div class="t" style="left:1136.30px;top:788.00px;transform:scaleX(1.0444)">6/16/2025</div>
<div class="t" style="left:1241.62px;top:788.00px;transform:scaleX(1.0315)">Crude Light (Globex), Jul 25 6600 Put</div>
<div class="t" style="left:176.60px;top:810.00px;transform:scaleX(0.9417)">P.US.CLEN256650</div>
<div class="t" style="left:387.56px;top:810.00px;transform:scaleX(0.9743)">2.22</div>
<div class="t" style="left:483.69px;top:810.00px;transform:scaleX(0.9744)">-0.17</div>
<div class="t" style="left:594.87px;top:810.00px;transform:scaleX(0.9743)">1</div>
<div class="t" style="left:680.87px;top:810.00px;transform:scaleX(0.9743)">1</div>
<div class="t" style="left:746.56px;top:810.00px;transform:scaleX(0.9743)">2.22</div>
<div class="t" style="left:832.56px;top:810.00px;transform:scaleX(0.9743)">2.27</div>
<div class="t" style="left:938.87px;top:810.00px;transform:scaleX(0.9743)">2</div>
<div class="t" style="left:991.57px;top:810.00px;transform:scaleX(0.9744)">-71.65</div>
<div class="t" style="left:1084.44px;top:810.00px;transform:scaleX(0.9743)">30.95</div>
<div class="t" style="left:1136.30px;top:810.00px;transform:scaleX(1.0444)">6/16/2025</div>
<div class="t" style="left:1241.62px;top:810.00px;transform:scaleX(1.0315)">Crude Light (Globex), Jul 25 6650 Put</div>
<div class="t" style="left:176.60px;top:832.00px;transform:scaleX(0.9417)">P.US.CLEN256700</div>
<div class="t" style="left:387.56px;top:832.00px;transform:scaleX(0.9743)">2.59</div>
<div class="t" style="left:483.69px;top:832.00px;transform:scaleX(0.9744)">-0.19</div>
<div class="t" style="left:594.87px;top:832.00px;transform:scaleX(0.9743)">0</div>
<div class="t" style="left:664.62px;top:832.00px;transform:scaleX(0.9743)">153</div>
<div class="t" style="left:746.56px;top:832.00px;transform:scaleX(0.9743)">2.59</div>
<div class="t" style="left:832.56px;top:832.00px;transform:scaleX(0.9743)">2.66</div>
<div class="t" style="left:930.75px;top:832.00px;transform:scaleX(0.9743)">58</div>
<div class="t" style="left:991.57px;top:832.00px;transform:scaleX(0.9744)">-77.34</div>
<div class="t" style="left:1084.44px;top:832.00px;transform:scaleX(0.9743)">30.62</div>
<div class="t" style="left:1136.30px;top:832.00px;transform:scaleX(1.0444)">6/16/2025</div>
<div class="t" style="left:1241.62px;top:832.00px;transform:scaleX(1.0315)">Crude Light (Globex), Jul 25 6700 Put</div>
<div class="t" style="left:176.60px;top:854.00px;transform:scaleX(0.9417)">P.US.CLEN256750</div>
<div class="t" style="left:407.87px;top:854.00px;transform:scaleX(0.9743)">3</div>
<div class="t" style="left:491.82px;top:854.00px;transform:scaleX(0.9744)">-0.2</div>
<div class="t" style="left:594.87px;top:854.00px;transform:scaleX(0.9743)">0</div>
<div class="t" style="left:664.62px;top:854.00px;transform:scaleX(0.9743)">143</div>
<div class="t" style="left:766.87px;top:854.00px;transform:scaleX(0.9743)">3</div>
<div class="t" style="left:832.56px;top:854.00px;transform:scaleX(0.9743)">3.07</div>
<div class="t" style="left:930.75px;top:854.00px;transform:scaleX(0.9743)">57</div>
<div class="t" style="left:991.57px;top:854.00px;transform:scaleX(0.9744)">-81.94</div>
<div class="t" style="left:1084.44px;top:854.00px;transform:scaleX(0.9743)">30.83</div>
<div class="t" style="left:1136.30px;top:854.00px;transform:scaleX(1.0444)">6/16/2025</div>
<div class="t" style="left:1241.62px;top:854.00px;transform:scaleX(1.0315)">Crude Light (Globex), Jul 25 6750 Put</div>
<svg class="a" style="left:236px;top:252px" width="22" height="20" shape-rendering="crispEdges"><path d="M8 3 H14 V7 H18 V13 H14 V17 H8 V13 H4 V7 H8 Z" fill="#000"/><path d="M7 2 H13 V6 H17 V12 H13 V16 H7 V12 H3 V6 H7 Z" fill="#000"/><path d="M8 3 H12 V7 H16 V11 H12 V15 H8 V11 H4 V7 H8 Z" fill="#fff"/></svg>
<div class="a" style="left:0;top:0;width:1533px;height:875px;border:1px solid #000"></div>
<div class="a" style="left:1px;top:1px;width:1531px;height:873px;border:1px solid rgba(255,255,255,0.85);border-top-color:#f3f9f0"></div>
</body></html>
